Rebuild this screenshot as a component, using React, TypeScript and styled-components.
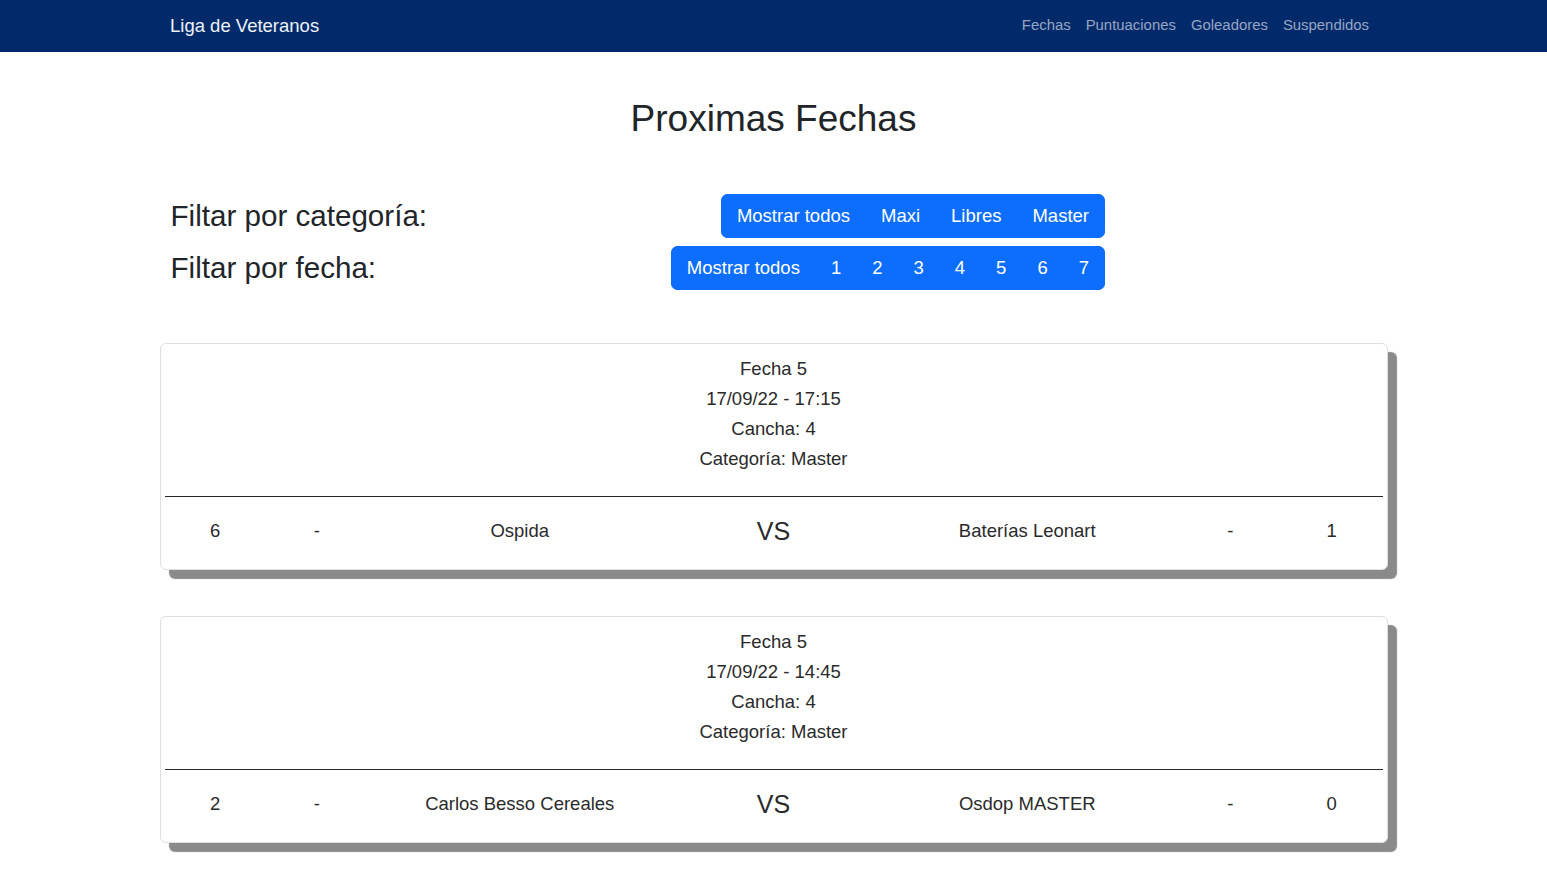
import React from "react";
import styled, { createGlobalStyle } from "styled-components";

const GlobalStyle = createGlobalStyle`
  html, body {
    margin: 0;
    padding: 0;
    background: #ffffff;
    font-family: "Liberation Sans", Arial, Helvetica, sans-serif;
    color: #212529;
  }
  * { box-sizing: border-box; }
`;

const NavBar = styled.nav`
  background: #022a6a;
  height: 52px;
  display: flex;
  justify-content: center;
`;

const NavInner = styled.div`
  width: 1207px;
  display: flex;
  align-items: center;
  justify-content: space-between;
`;

const Brand = styled.a`
  font-size: 18.5px;
  color: #eef2f8;
  text-decoration: none;
  line-height: 1;
`;

const NavLinks = styled.div`
  display: flex;
  align-items: center;
  padding-bottom: 3px;
`;

const NavLink = styled.a`
  font-size: 14.9px;
  color: #96a6c3;
  padding: 0 7.5px;
  text-decoration: none;
  &:last-child { padding-right: 8px; }
`;

const Main = styled.main`
  width: 1228px;
  margin: 0 auto;
  display: flex;
  flex-direction: column;
  padding-bottom: 40px;
`;

const Title = styled.h1`
  margin: 45px 0 0;
  font-size: 37px;
  font-weight: 400;
  line-height: 44px;
  text-align: center;
  color: #212529;
`;

const Filters = styled.section`
  margin-top: 53px;
  display: flex;
  flex-direction: column;
  gap: 8px;
  padding-left: 11px;
  padding-right: 283px;
`;

const FilterRow = styled.div`
  display: flex;
  align-items: center;
  justify-content: space-between;
`;

const FilterLabel = styled.h2`
  margin: 0;
  font-size: 29.6px;
  font-weight: 400;
  line-height: 36px;
  color: #212529;
`;

const ButtonGroup = styled.div`
  display: flex;
  height: 44px;
  border-radius: 7px;
  overflow: hidden;
  background: #0d6efd;
`;

const GroupButton = styled.button`
  border: none;
  background: #0d6efd;
  color: #ffffff;
  font-family: "Liberation Sans", Arial, Helvetica, sans-serif;
  font-size: 18.5px;
  padding: 0 15.5px;
  height: 44px;
  cursor: pointer;
`;

const Cards = styled.section`
  margin-top: 53px;
  display: flex;
  flex-direction: column;
  gap: 46px;
`;

const Card = styled.article`
  border: 1px solid #dfdfdf;
  border-radius: 6px;
  background: #ffffff;
  box-shadow: 9px 9px 1px #8a8a8a;
  padding: 0 4px;
  height: 227px;
  display: flex;
  flex-direction: column;
`;

const CardHeader = styled.div`
  padding-top: 10px;
  padding-bottom: 22px;
  text-align: center;
  font-size: 18.5px;
  line-height: 30px;
  color: #2a2a2a;
`;

const Divider = styled.hr`
  margin: 0;
  border: none;
  border-top: 1px solid #262626;
`;

const MatchRow = styled.div`
  display: grid;
  grid-template-columns: 1fr 1fr 3fr 2fr 3fr 1fr 1fr;
  align-items: center;
  padding-top: 20px;
`;

const Cell = styled.div<{ $big?: boolean }>`
  text-align: center;
  font-size: ${(p) => (p.$big ? "25px" : "18.5px")};
  line-height: 28px;
  color: #2a2a2a;
`;

type Match = {
  fecha: number;
  dia: string;
  cancha: number;
  categoria: string;
  local: string;
  localGoles: number;
  visita: string;
  visitaGoles: number;
};

const matches: Match[] = [
  {
    fecha: 5,
    dia: "17/09/22 - 17:15",
    cancha: 4,
    categoria: "Master",
    local: "Ospida",
    localGoles: 6,
    visita: "Baterías Leonart",
    visitaGoles: 1,
  },
  {
    fecha: 5,
    dia: "17/09/22 - 14:45",
    cancha: 4,
    categoria: "Master",
    local: "Carlos Besso Cereales",
    localGoles: 2,
    visita: "Osdop MASTER",
    visitaGoles: 0,
  },
];

export default function App() {
  return (
    <>
      <GlobalStyle />
      <NavBar>
        <NavInner>
          <Brand href="#">Liga de Veteranos</Brand>
          <NavLinks>
            <NavLink href="#">Fechas</NavLink>
            <NavLink href="#">Puntuaciones</NavLink>
            <NavLink href="#">Goleadores</NavLink>
            <NavLink href="#">Suspendidos</NavLink>
          </NavLinks>
        </NavInner>
      </NavBar>
      <Main>
        <Title>Proximas Fechas</Title>
        <Filters>
          <FilterRow>
            <FilterLabel>Filtar por categoría:</FilterLabel>
            <ButtonGroup>
              {["Mostrar todos", "Maxi", "Libres", "Master"].map((t) => (
                <GroupButton key={t}>{t}</GroupButton>
              ))}
            </ButtonGroup>
          </FilterRow>
          <FilterRow>
            <FilterLabel>Filtar por fecha:</FilterLabel>
            <ButtonGroup>
              {["Mostrar todos", "1", "2", "3", "4", "5", "6", "7"].map((t) => (
                <GroupButton key={t}>{t}</GroupButton>
              ))}
            </ButtonGroup>
          </FilterRow>
        </Filters>
        <Cards>
          {matches.map((m, i) => (
            <Card key={i}>
              <CardHeader>
                <div>Fecha {m.fecha}</div>
                <div>{m.dia}</div>
                <div>Cancha: {m.cancha}</div>
                <div>Categoría: {m.categoria}</div>
              </CardHeader>
              <Divider />
              <MatchRow>
                <Cell>{m.localGoles}</Cell>
                <Cell>-</Cell>
                <Cell>{m.local}</Cell>
                <Cell $big>VS</Cell>
                <Cell>{m.visita}</Cell>
                <Cell>-</Cell>
                <Cell>{m.visitaGoles}</Cell>
              </MatchRow>
            </Card>
          ))}
        </Cards>
      </Main>
    </>
  );
}
